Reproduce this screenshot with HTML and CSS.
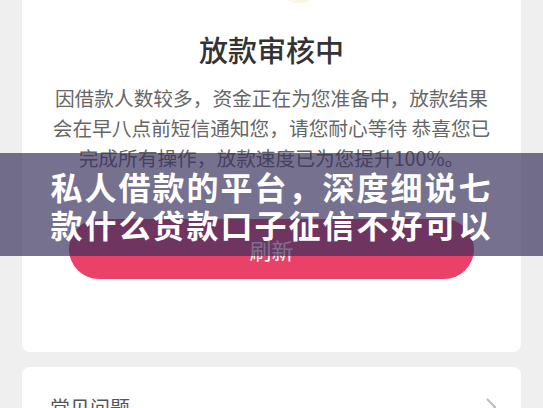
FILE: index.html
```html
<!DOCTYPE html>
<html lang="zh-CN">
<head>
  <meta charset="UTF-8" />
  <meta name="viewport" content="width=device-width, initial-scale=1.0"/>
  <title>放款审核中</title>
  <link rel="stylesheet" href="styles.css">
</head>
<body>
  <div class="page">
    <div class="card status-card">
      <div class="status-icon"><div class="status-icon-circle"></div></div>
      <h1 class="status-title">放款审核中</h1>
      <p class="status-text">因借款人数较多，资金正在为您准备中，放款结果会在早八点前短信通知您，请您耐心等待 恭喜您已完成所有操作，放款速度已为您提升100%。</p>
      <button class="refresh-btn">刷新</button>
    </div>

    <div class="card faq-card">
      <span class="faq-label">常见问题</span>
      <svg class="faq-arrow" width="12" height="20" viewBox="0 0 12 20">
        <path d="M2 2 L10 10 L2 18" fill="none" stroke="#bbb" stroke-width="2"/>
      </svg>
    </div>
  </div>

  <div class="headline">
    <div class="headline-text">私人借款的平台，深度细说七款什么贷款口子征信不好可以</div>
  </div>
</body>
</html>
```

FILE: styles.css
```css
body {
  font-family: 'Noto Sans CJK SC', 'Noto Sans', sans-serif;
  margin: 0;
  padding: 0;
  background: #efefef;
}

.page {
  padding: 0 22px;
}

.card {
  background: #fff;
  border-radius: 8px;
}

.status-card {
  border-radius: 0 0 8px 8px;
  padding: 0 27px 73px;
  text-align: center;
}

/* only the bottom edge of the status icon is on screen */
.status-icon {
  height: 3px;
  overflow: hidden;
  display: flex;
  justify-content: center;
}

.status-icon-circle {
  width: 50px;
  height: 50px;
  margin-top: -47px;
  margin-left: 54px;
  border-radius: 50%;
  background: #f8f5e2;
  flex-shrink: 0;
}

.status-title {
  margin: 26px 0 0;
  font-size: 29px;
  line-height: 40px;
  font-weight: 500;
  color: #333;
}

.status-text {
  margin: 14px 0 0;
  font-size: 19.7px;
  line-height: 30px;
  color: #666;
}

.refresh-btn {
  display: block;
  width: 405px;
  height: 60px;
  margin: 46px auto 0;
  border: none;
  border-radius: 30px;
  background: #ea4169;
  color: #fff;
  font-family: inherit;
  font-size: 22px;
}

.faq-card {
  margin-top: 15px;
  height: 80px;
  padding: 0 24px 0 28px;
  display: flex;
  justify-content: space-between;
  align-items: center;
}

.faq-label {
  font-size: 20px;
  color: #555;
}

.faq-arrow {
  flex-shrink: 0;
}

.headline {
  position: absolute;
  left: 0;
  right: 0;
  top: 153px;
  height: 103px;
  background: rgba(54, 46, 92, 0.68);
  display: flex;
  align-items: center;
  justify-content: center;
}

.headline-text {
  width: 450px;
  text-align: center;
  color: #fff;
  font-size: 32px;
  font-weight: bold;
  line-height: 38px;
  letter-spacing: 2px;
}
```
